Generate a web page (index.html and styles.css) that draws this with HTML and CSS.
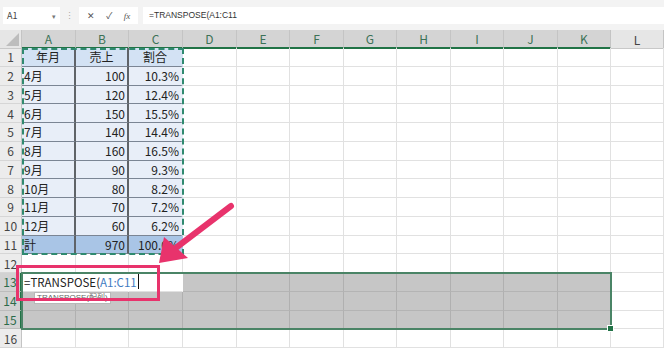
FILE: index.html
```html
<!DOCTYPE html>
<html>
<head>
<title>TRANSPOSE</title>
<link rel="stylesheet" href="styles.css">
</head>
<body>
<div class="page">

  <div class="fbar">
    <div class="namebox">A1<span class="drop">&#9662;</span></div>
    <div class="grip">&#8942;</div>
    <div class="fxbox"><span>&#10005;</span><span>&#10003;</span><span class="fx">fx</span></div>
    <div class="formula">=TRANSPOSE(A1:C11</div>
  </div>

  <div class="sheet">
    <div class="row head">
      <b class="corner"></b>
      <i class="sel">A</i><i class="sel">B</i><i class="sel">C</i><i class="sel">D</i><i class="sel">E</i><i class="sel">F</i><i class="sel">G</i><i class="sel">H</i><i class="sel">I</i><i class="sel">J</i><i class="sel">K</i><i>L</i>
    </div>
    <div class="row"><b>1</b><i class="t th">年月</i><i class="t th">売上</i><i class="t th last">割合</i><i></i><i></i><i></i><i></i><i></i><i></i><i></i><i></i><i></i></div>
    <div class="row"><b>2</b><i class="t">4月</i><i class="t n">100</i><i class="t n last">10.3%</i><i></i><i></i><i></i><i></i><i></i><i></i><i></i><i></i><i></i></div>
    <div class="row"><b>3</b><i class="t">5月</i><i class="t n">120</i><i class="t n last">12.4%</i><i></i><i></i><i></i><i></i><i></i><i></i><i></i><i></i><i></i></div>
    <div class="row"><b>4</b><i class="t">6月</i><i class="t n">150</i><i class="t n last">15.5%</i><i></i><i></i><i></i><i></i><i></i><i></i><i></i><i></i><i></i></div>
    <div class="row"><b>5</b><i class="t">7月</i><i class="t n">140</i><i class="t n last">14.4%</i><i></i><i></i><i></i><i></i><i></i><i></i><i></i><i></i><i></i></div>
    <div class="row"><b>6</b><i class="t">8月</i><i class="t n">160</i><i class="t n last">16.5%</i><i></i><i></i><i></i><i></i><i></i><i></i><i></i><i></i><i></i></div>
    <div class="row"><b>7</b><i class="t">9月</i><i class="t n">90</i><i class="t n last">9.3%</i><i></i><i></i><i></i><i></i><i></i><i></i><i></i><i></i><i></i></div>
    <div class="row"><b>8</b><i class="t">10月</i><i class="t n">80</i><i class="t n last">8.2%</i><i></i><i></i><i></i><i></i><i></i><i></i><i></i><i></i><i></i></div>
    <div class="row"><b>9</b><i class="t">11月</i><i class="t n">70</i><i class="t n last">7.2%</i><i></i><i></i><i></i><i></i><i></i><i></i><i></i><i></i><i></i></div>
    <div class="row"><b>10</b><i class="t">12月</i><i class="t n">60</i><i class="t n last">6.2%</i><i></i><i></i><i></i><i></i><i></i><i></i><i></i><i></i><i></i></div>
    <div class="row"><b>11</b><i class="t tot">計</i><i class="t tot n">970</i><i class="t tot n last">100.0%</i><i></i><i></i><i></i><i></i><i></i><i></i><i></i><i></i><i></i></div>
    <div class="row"><b>12</b><i></i><i></i><i></i><i></i><i></i><i></i><i></i><i></i><i></i><i></i><i></i><i></i></div>
    <div class="row"><b class="rsel">13</b><i class="edit"><span class="entry">=TRANSPOSE(<span class="ref">A1:C11</span><span class="caret"></span></span></i><i class="edit"></i><i class="edit"></i><i class="g"></i><i class="g"></i><i class="g"></i><i class="g"></i><i class="g"></i><i class="g"></i><i class="g"></i><i class="g"></i><i></i></div>
    <div class="row"><b class="rsel">14</b><i class="g"></i><i class="g"></i><i class="g"></i><i class="g"></i><i class="g"></i><i class="g"></i><i class="g"></i><i class="g"></i><i class="g"></i><i class="g"></i><i class="g"></i><i></i></div>
    <div class="row"><b class="rsel">15</b><i class="g"></i><i class="g"></i><i class="g"></i><i class="g"></i><i class="g"></i><i class="g"></i><i class="g"></i><i class="g"></i><i class="g"></i><i class="g"></i><i class="g"></i><i></i></div>
    <div class="row"><b>16</b><i></i><i></i><i></i><i></i><i></i><i></i><i></i><i></i><i></i><i></i><i></i><i></i></div>
  </div>

  <!-- copy range marquee, selection and hint -->
  <div class="ants"></div>
  <div class="selbox"><span class="handle"></span></div>
  <div class="hint">TRANSPOSE(配列)</div>

  <svg class="callout" width="664" height="348" viewBox="0 0 664 348">
    <rect x="17.5" y="266.5" width="141" height="33" fill="none" stroke="#e8336c" stroke-width="3"/>
    <line x1="231" y1="206" x2="177" y2="247" stroke="#e8336c" stroke-width="6" stroke-linecap="round"/>
    <polygon points="159,263 164,237 188,258" fill="#e8336c"/>
  </svg>

</div>
</body>
</html>
```

FILE: styles.css
```css
body {
  margin: 0;
  background: #fff;
  font-family: "Noto Sans CJK JP", "Liberation Sans", sans-serif;
  color: #222;
}

.page {
  position: relative;
  width: 664px;
  height: 348px;
  overflow: hidden;
}

/* formula bar */
.fbar {
  height: 30px;
  box-sizing: border-box;
  padding-top: 7px;
  background: #f3f3f3;
  display: flex;
  align-items: flex-start;
  font-size: 9px;
  color: #444;
}

.namebox {
  margin-left: 3px;
  width: 57px;
  height: 17px;
  box-sizing: border-box;
  padding: 0 4px;
  background: #fff;
  display: flex;
  align-items: center;
  justify-content: space-between;
}

.namebox .drop {
  font-size: 7px;
  color: #777;
}

.grip {
  width: 19px;
  text-align: center;
  line-height: 17px;
  color: #aaa;
}

.fxbox {
  width: 59px;
  height: 17px;
  background: #fff;
  display: flex;
  align-items: center;
  justify-content: space-around;
  padding: 0 2px;
  box-sizing: border-box;
  color: #555;
}

.fxbox .fx {
  font-family: "Liberation Serif", serif;
  font-style: italic;
  font-size: 9px;
}

.formula {
  flex: 1;
  margin-left: 5px;
  height: 17px;
  line-height: 17px;
  padding-left: 6px;
  background: #fff;
  color: #333;
  font-size: 8.5px;
  font-family: "Liberation Sans", sans-serif;
}

/* grid */
.row {
  display: grid;
  grid-template-columns: 22px 54px 53px 54px 54px 53px 54px 53px 54px 53px 54px 53px 53px;
  height: 18.75px;
}

.row > * {
  box-sizing: border-box;
  border-right: 1px solid #e1e1e1;
  border-bottom: 1px solid #e1e1e1;
  font-style: normal;
  font-weight: normal;
  font-size: 12px;
  display: flex;
  align-items: center;
  padding: 0 2px;
  white-space: nowrap;
  overflow: visible;
}

.row b {
  justify-content: center;
  background: #ececec;
  border-right-color: #c4c4c4;
  border-bottom-color: #d6d6d6;
  color: #444;
  padding: 0;
}

.row b.rsel {
  background: #d2d2d2;
  color: #2b6b4a;
  border-right: 2px solid #217346;
  border-bottom-color: #bcbcbc;
}

.head {
  height: 18px;
}

.head i {
  justify-content: center;
  background: #e6e6e6;
  border-right-color: #c4c4c4;
  border-bottom: 1px solid #c8c8c8;
  color: #444;
}

.head i.sel {
  background: #d4d4d4;
  color: #3c7257;
  border-bottom: 2px solid #217346;
}

.head .corner {
  position: relative;
  background: #e6e6e6;
  border-bottom: 1px solid #c8c8c8;
}

.head .corner::after {
  content: "";
  position: absolute;
  right: 2px;
  bottom: 2px;
  border-left: 13px solid transparent;
  border-bottom: 13px solid #bdbdbd;
}

/* data table */
.t {
  background: #e8eef8;
  border-right: 2px solid #5f6368;
  border-bottom: 1px solid #7b8594;
  color: #222;
}

.t.last {
  border-right-color: transparent;
}

.t.th {
  background: #d3e2f4;
  justify-content: center;
}

.t.tot {
  background: #a9c5e6;
}

.t.n {
  justify-content: flex-end;
}

/* selection A13:K15 */
.g {
  background: #c6c6c6;
  border-right-color: #b0b0b0;
  border-bottom-color: #b4b4b4;
}

.edit {
  background: transparent;
  border-right-color: transparent;
}

.entry {
  font-size: 11.5px;
  color: #222;
  display: flex;
  align-items: center;
}

.entry .ref {
  color: #3f7cc2;
}

.entry .caret {
  display: inline-block;
  width: 1px;
  height: 15px;
  margin-left: 1px;
  background: #111;
}

.ants {
  position: absolute;
  left: 22px;
  top: 48px;
  width: 162px;
  height: 207px;
  box-sizing: border-box;
  border: 2px dashed #2f8a70;
}

.selbox {
  position: absolute;
  left: 21px;
  top: 272px;
  width: 591px;
  height: 58px;
  box-sizing: border-box;
  border: 2px solid #4a8466;
}

.handle {
  position: absolute;
  right: -4px;
  bottom: -4px;
  width: 5px;
  height: 5px;
  background: #217346;
  border: 1px solid #fff;
}

.hint {
  position: absolute;
  left: 34px;
  top: 292px;
  padding: 0 2px;
  height: 10px;
  line-height: 10px;
  font-size: 8px;
  color: #666;
  background: #fff;
  border: 1px solid #b8b8b8;
  font-family: "Liberation Sans", "Noto Sans CJK JP", sans-serif;
}

.callout {
  position: absolute;
  left: 0;
  top: 0;
  pointer-events: none;
}
```
